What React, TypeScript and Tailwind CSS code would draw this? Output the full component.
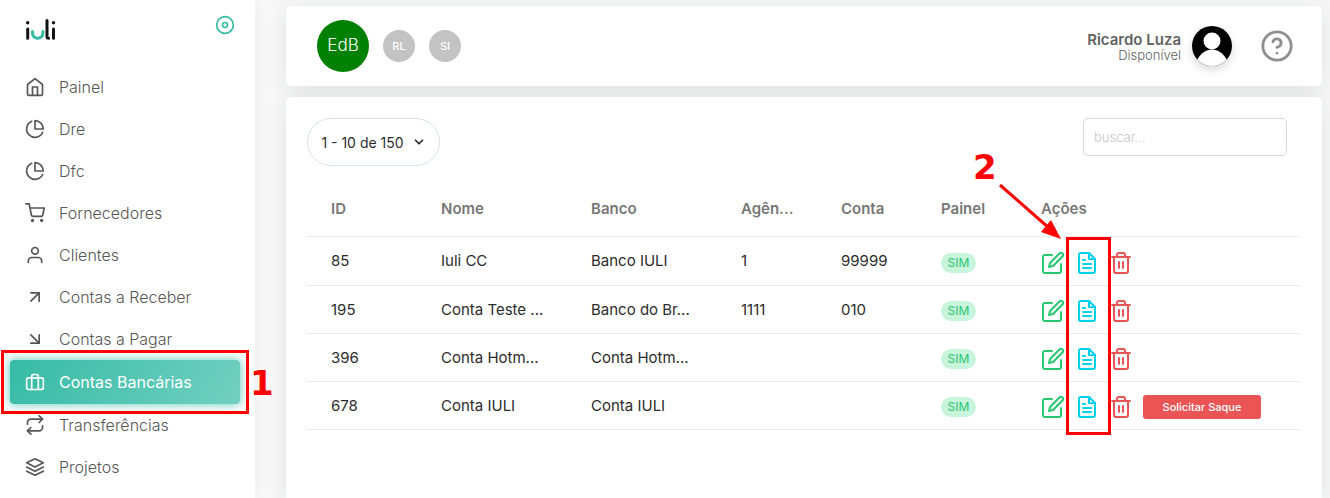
import type { IconType } from "react-icons";
import {
  FiArrowDownRight,
  FiArrowUpRight,
  FiBriefcase,
  FiChevronDown,
  FiDisc,
  FiEdit,
  FiFileText,
  FiHelpCircle,
  FiHome,
  FiLayers,
  FiPieChart,
  FiRepeat,
  FiShoppingCart,
  FiTrash2,
  FiUser,
} from "react-icons/fi";

const menu: { label: string; icon: IconType; active?: boolean }[] = [
  { label: "Painel", icon: FiHome },
  { label: "Dre", icon: FiPieChart },
  { label: "Dfc", icon: FiPieChart },
  { label: "Fornecedores", icon: FiShoppingCart },
  { label: "Clientes", icon: FiUser },
  { label: "Contas a Receber", icon: FiArrowUpRight },
  { label: "Contas a Pagar", icon: FiArrowDownRight },
  { label: "Contas Bancárias", icon: FiBriefcase, active: true },
  { label: "Transferências", icon: FiRepeat },
  { label: "Projetos", icon: FiLayers },
];

const columns = [
  { label: "ID", width: "w-[110px]" },
  { label: "Nome", width: "w-[150px]" },
  { label: "Banco", width: "w-[150px]" },
  { label: "Agên...", width: "w-[100px]" },
  { label: "Conta", width: "w-[100px]" },
  { label: "Painel", width: "w-[100px]" },
  { label: "Ações", width: "" },
];

const accounts = [
  { id: 85, nome: "Iuli CC", banco: "Banco IULI", agencia: "1", conta: "99999" },
  { id: 195, nome: "Conta Teste ...", banco: "Banco do Br...", agencia: "1111", conta: "010" },
  { id: 396, nome: "Conta Hotm...", banco: "Conta Hotm...", agencia: "", conta: "" },
  { id: 678, nome: "Conta IULI", banco: "Conta IULI", agencia: "", conta: "", saque: true },
];

function Logo() {
  return (
    <svg width="30" height="22" viewBox="0 0 30 22" fill="none" strokeWidth="3" strokeLinecap="round" role="img" aria-label="iuli">
      <g fill="#111">
        <circle cx="1.7" cy="3.8" r="1.7" />
        <circle cx="27.5" cy="3.8" r="1.7" />
      </g>
      <path d="M1.7 10v9.3M27.5 10v9.3M21 1.5v16q0 1.8 1.6 1.8" stroke="#111" />
      <path d="M6.5 12.5v1.5a5.2 5.2 0 0 0 5.2 5.3a5.2 5.2 0 0 0 5.2 -5.3v-1.5" stroke="#36bba5" />
    </svg>
  );
}

function Sidebar() {
  return (
    <aside className="relative z-10 w-[255px] shrink-0 bg-white shadow-[0_0_15px_rgba(34,41,47,0.05)]">
      <div className="flex h-[66px] items-start justify-between pl-[26px] pr-5 pt-[15px]">
        <a href="#" className="pt-1">
          <Logo />
        </a>
        <button type="button" aria-label="Fixar menu" className="text-[#36bba5]">
          <FiDisc size={20} />
        </button>
      </div>
      <nav>
        <ul className="flex flex-col pl-[10px] pr-[15px]">
          {menu.map(({ label, icon: Icon, active }) => (
            <li key={label} className="relative">
              <a
                href="#"
                className={
                  active
                    ? "flex h-11 items-center gap-[14px] rounded bg-linear-118 from-[#36bba5] to-[#36bba5]/70 pl-[15px] text-[16px] text-white shadow-[0_0_10px_1px_rgba(54,187,165,0.7)]"
                    : "flex h-[42px] items-center gap-[14px] pl-[15px] text-[16px] font-light text-[#565656]"
                }
              >
                <Icon size={20} />
                {label}
              </a>
              {active && (
                <>
                  <span className="absolute -inset-x-[9px] -inset-y-[10px] border-[3px] border-[#f00]" />
                  <span className="absolute left-[240px] top-0 font-['DejaVu_Sans',sans-serif] text-[34px] font-bold leading-[46px] text-[#f00]">
                    1
                  </span>
                </>
              )}
            </li>
          ))}
        </ul>
      </nav>
    </aside>
  );
}

function Avatar() {
  return (
    <svg width="40" height="40" viewBox="0 0 40 40" className="rounded-full shadow-[0_4px_8px_rgba(0,0,0,0.15)]" aria-hidden="true">
      <rect width="40" height="40" fill="#000" />
      <circle cx="20" cy="15" r="8.5" fill="#fff" />
      <path d="M5 34C9 27 14 23.5 20 23.5S31 27 35 34V40H5z" fill="#fff" />
    </svg>
  );
}

function Topbar() {
  return (
    <header className="flex h-20 items-center justify-between rounded-md bg-white pl-[31px] pr-7 shadow-[0_4px_24px_rgba(34,41,47,0.1)]">
      <div className="flex items-center gap-[14px]">
        <button type="button" className="size-[52px] rounded-full bg-[#008000] text-[17px] font-light text-white">
          EdB
        </button>
        <button type="button" className="size-8 rounded-full bg-[#c3c3c3] text-[11px] font-medium text-white">
          RL
        </button>
        <button type="button" className="size-8 rounded-full bg-[#c3c3c3] text-[11px] font-medium text-white">
          SI
        </button>
      </div>
      <div className="flex items-center">
        <div className="mr-[11px] pt-[2px] text-right text-[#626262]">
          <p className="text-[15px] font-semibold leading-4">Ricardo Luza</p>
          <p className="text-[13px] font-light leading-[14px]">Disponível</p>
        </div>
        <Avatar />
        <button type="button" aria-label="Ajuda" className="ml-7 text-[#8f8f8f]">
          <FiHelpCircle size={34} />
        </button>
      </div>
    </header>
  );
}

function AccountsTable() {
  return (
    <div className="relative">
      <table className="w-full table-fixed border-collapse text-left text-[15px]">
        <thead>
          <tr className="h-14 border-b border-[#ebebeb] text-[#777]">
            {columns.map((c) => (
              <th key={c.label} className={`${c.width} pl-6 pt-[2px] font-semibold`}>
                {c.label}
              </th>
            ))}
          </tr>
        </thead>
        <tbody className="text-[#2c2c2c]">
          {accounts.map((a) => (
            <tr key={a.id} className="h-12 border-b border-[#ebebeb] first:h-[49px]">
              <td className="pl-6 pt-[2px]">{a.id}</td>
              <td className="whitespace-nowrap pl-6 pt-[2px]">{a.nome}</td>
              <td className="whitespace-nowrap pl-6 pt-[2px]">{a.banco}</td>
              <td className="pl-6 pt-[2px]">{a.agencia}</td>
              <td className="pl-6 pt-[2px]">{a.conta}</td>
              <td className="pl-6 pt-1">
                <span className="flex h-5 w-[35px] items-center justify-center rounded-full bg-[#c9f4dc] text-[12px] text-[#28c76f]">
                  SIM
                </span>
              </td>
              <td className="pl-6 pt-1">
                <div className="flex items-center gap-[10px]">
                  <button type="button" aria-label="Editar" className="text-[#28c76f]">
                    <FiEdit size={24} />
                  </button>
                  <button type="button" aria-label="Extrato" className="text-[#00cfe8]">
                    <FiFileText size={24} />
                  </button>
                  <button type="button" aria-label="Excluir" className="text-[#ea5455]">
                    <FiTrash2 size={24} />
                  </button>
                  {a.saque && (
                    <button type="button" className="h-6 w-[118px] rounded-[3px] bg-[#ea5455] text-[11px] font-medium text-white">
                      Solicitar Saque
                    </button>
                  )}
                </div>
              </td>
            </tr>
          ))}
        </tbody>
      </table>

      {/* passo 2: coluna do extrato */}
      <div className="absolute left-[759px] top-[57px] h-[198px] w-[45px] border-[3px] border-[#f00]" />
      <svg className="absolute left-[690px] top-[3px]" width="72" height="58" viewBox="0 0 72 58" aria-hidden="true">
        <path d="M3 2L52 45" stroke="#f00" strokeWidth="3" />
        <path d="M64 56L44 49L54 37Z" fill="#f00" />
      </svg>
      <span className="absolute -top-9 left-[666px] font-['DejaVu_Sans',sans-serif] text-[34px] font-bold leading-[46px] text-[#f00]">
        2
      </span>
    </div>
  );
}

export default function App() {
  return (
    <div className="flex min-h-screen bg-[#f8f8f8] font-['Inter',sans-serif]">
      <Sidebar />
      <div className="flex min-w-0 flex-1 flex-col gap-[11px] pl-[31px] pr-2 pt-[6px]">
        <Topbar />
        <main className="flex-1 rounded-t-md bg-white pl-[21px] pr-[22px] pt-[21px] shadow-[0_4px_24px_rgba(34,41,47,0.1)]">
          <div className="mb-[14px] flex items-start justify-between pr-[13px]">
            <button
              type="button"
              className="flex h-12 w-[133px] items-center justify-center gap-2 rounded-full border border-[#dae1e7] text-[14px] text-[#2c2c2c]"
            >
              1 - 10 de 150
              <FiChevronDown size={14} strokeWidth={3} />
            </button>
            <input
              type="text"
              aria-label="Buscar"
              placeholder="buscar..."
              className="h-[38px] w-[204px] rounded-[5px] border border-[#d9d9d9] px-[10px] text-[13px] font-light placeholder:text-[#c5c5c5]"
            />
          </div>
          <AccountsTable />
        </main>
      </div>
    </div>
  );
}
